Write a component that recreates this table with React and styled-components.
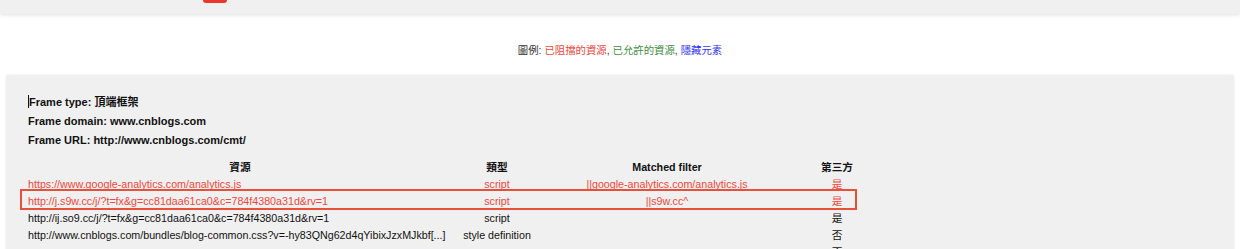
import React from 'react'
import styled, { createGlobalStyle } from 'styled-components'

const GlobalStyle = createGlobalStyle`
  html, body {
    margin: 0;
    padding: 0;
    background: #ffffff;
    overflow: hidden;
  }
  body {
    font-family: "Liberation Sans", Arial, "Noto Sans CJK TC", sans-serif;
    color: #111;
  }
`

const TopBar = styled.div`
  height: 14px;
  background: #f0f0f0;
  box-shadow: 0 1px 4px rgba(0, 0, 0, 0.12);
  display: flex;
  align-items: flex-start;
`

const RedTab = styled.div`
  margin-left: 203px;
  width: 24px;
  height: 3px;
  background: #e8392c;
  border-radius: 0 0 4px 4px;
`

const Legend = styled.div`
  margin-top: 30px;
  text-align: center;
  font-size: 10.4px;
  line-height: 14px;
  color: #333;
`

const Tag = styled.span`
  color: ${p => p.color};
`

const Panel = styled.div`
  margin: 17px 6px 0 6px;
  background: #f0f0f0;
  border-radius: 3px;
  box-shadow: 0 0 3px rgba(0, 0, 0, 0.08);
  padding: 18px 22px 20px 22px;
`

const InfoLine = styled.div`
  font-size: 11px;
  font-weight: bold;
  line-height: 19px;
  color: #111;
`

const Caret = styled.span`
  display: inline-block;
  width: 1px;
  height: 13px;
  background: #111;
  vertical-align: -2px;
`

const TableWrap = styled.div`
  position: relative;
  margin-top: 9px;
  width: 840px;
`

const Table = styled.table`
  border-collapse: collapse;
  table-layout: fixed;
  width: 854px;
  font-size: 10.7px;
`

const Th = styled.th`
  font-weight: bold;
  height: 17px;
  padding: 0;
  line-height: 17px;
  text-align: center;
  color: #111;
`

const Td = styled.td`
  height: 17px;
  padding: 0;
  line-height: 17px;
  white-space: nowrap;
  overflow: hidden;
  text-align: ${p => (p.left ? 'left' : 'center')};
  color: ${p => (p.blocked ? '#f0483c' : '#111')};
`

const Highlight = styled.div`
  position: absolute;
  left: -8px;
  top: 30px;
  width: 833px;
  height: 17px;
  border: 2px solid #e8503a;
`

const rows = [
  { url: 'https://www.google-analytics.com/analytics.js', type: 'script', filter: '||google-analytics.com/analytics.js', third: '是', blocked: true },
  { url: 'http://j.s9w.cc/j/?t=fx&g=cc81daa61ca0&c=784f4380a31d&rv=1', type: 'script', filter: '||s9w.cc^', third: '是', blocked: true },
  { url: 'http://ij.so9.cc/j/?t=fx&g=cc81daa61ca0&c=784f4380a31d&rv=1', type: 'script', filter: '', third: '是' },
  { url: 'http://www.cnblogs.com/bundles/blog-common.css?v=-hy83QNg62d4qYibixJzxMJkbf[...]', type: 'style definition', filter: '', third: '否' },
  { url: '', type: '', filter: '', third: '否' },
]

export default function App() {
  return (
    <>
      <GlobalStyle />
      <TopBar>
        <RedTab />
      </TopBar>
      <Legend>
        圖例: <Tag color="#f0483c">已阻擋的資源</Tag>, <Tag color="#3f8f3f">已允許的資源</Tag>, <Tag color="#3333f5">隱藏元素</Tag>
      </Legend>
      <Panel>
        <InfoLine><Caret />Frame type: 頂端框架</InfoLine>
        <InfoLine>Frame domain: www.cnblogs.com</InfoLine>
        <InfoLine>Frame URL: http://www.cnblogs.com/cmt/</InfoLine>
        <TableWrap>
          <Table>
            <colgroup>
              <col style={{ width: 424 }} />
              <col style={{ width: 90 }} />
              <col style={{ width: 250 }} />
              <col style={{ width: 90 }} />
            </colgroup>
            <thead>
              <tr>
                <Th>資源</Th>
                <Th>類型</Th>
                <Th>Matched filter</Th>
                <Th>第三方</Th>
              </tr>
            </thead>
            <tbody>
              {rows.map((r, i) => (
                <tr key={i}>
                  <Td left blocked={r.blocked}>{r.url}</Td>
                  <Td blocked={r.blocked}>{r.type}</Td>
                  <Td blocked={r.blocked}>{r.filter}</Td>
                  <Td blocked={r.blocked}>{r.third}</Td>
                </tr>
              ))}
            </tbody>
          </Table>
          <Highlight />
        </TableWrap>
      </Panel>
    </>
  )
}
